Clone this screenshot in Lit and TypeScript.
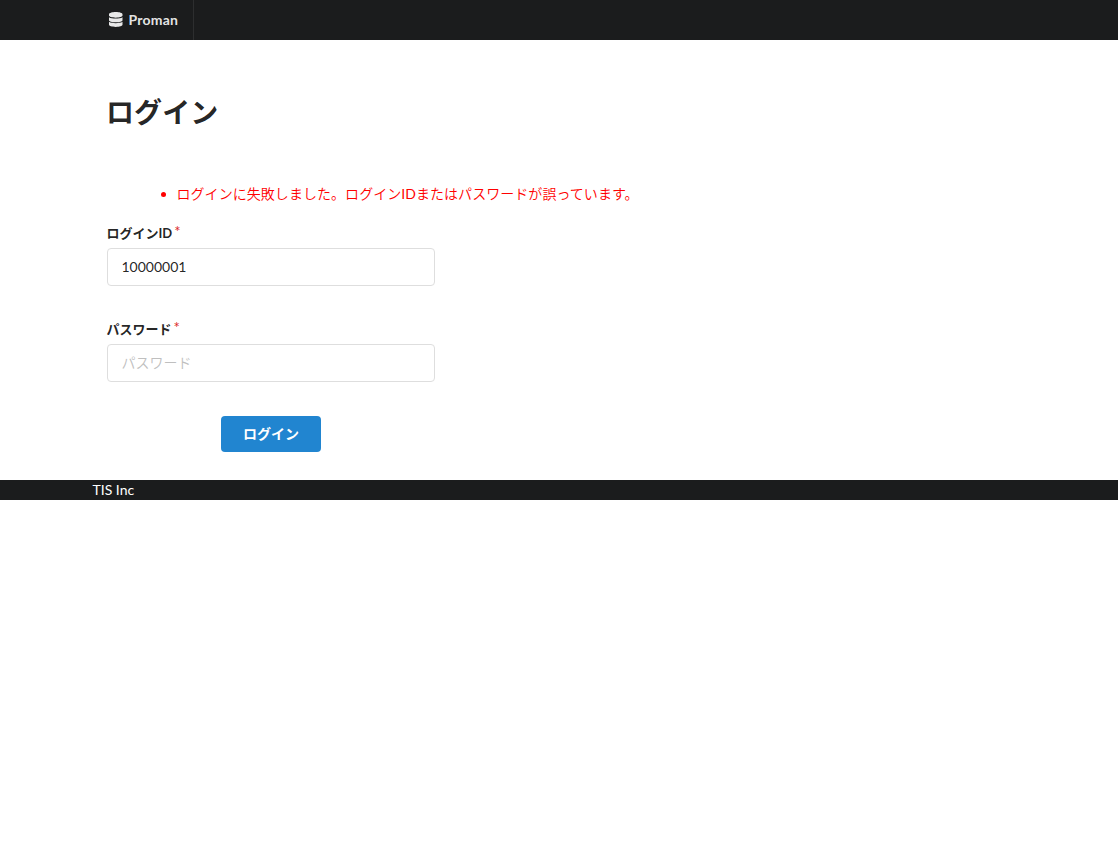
import { LitElement, html, css } from "lit";
import { customElement } from "lit/decorators.js";

@customElement("app-root")
class AppRoot extends LitElement {
  static styles = css`
    :host { display: block; font: 14px/20px Lato, "Noto Sans CJK JP DemiLight", "Noto Sans CJK JP", sans-serif; color: rgba(0,0,0,.87); }
    * { box-sizing: border-box; }
    .bar { height: 40px; background: #1b1c1d; padding-left: 93px; display: flex; }
    .brand { display: flex; align-items: center; width: 101px; padding-left: 16px; border-right: 1px solid #2d2e2f; color: rgba(255,255,255,.9); font-weight: 700; letter-spacing: .2px; }
    .brand svg { width: 13.5px; height: 15px; margin: -1px 6px 0 0; }
    .main { height: 440px; padding: 52px 0 0 107px; }
    h1 { margin: 0 0 0 -1px; height: 40px; font-family: Lato, "Noto Sans CJK JP", sans-serif; font-size: 28px; line-height: 40px; font-weight: 700; letter-spacing: .1px; }
    .errors { margin: 52px 0 0; padding: 0 0 0 69.5px; color: #f00; line-height: 20px; letter-spacing: .05px; }
    .errors li { height: 20px; }
    .label { display: block; height: 17px; margin: 21px 0 6px -.5px; font-family: Lato, "Noto Sans CJK JP", sans-serif; font-size: 13px; line-height: 17px; font-weight: 700; }
    .second { margin-top: 35px; }
    .star { color: #db2828; margin-left: 2px; display: inline-block; font-weight: 400; font-size: 15px; line-height: 10px; vertical-align: 1.5px; }
    input { display: block; width: 328px; height: 38px; border: 1px solid #dedede; border-radius: 4px; padding: 0 13.5px 1px; font: inherit; color: inherit; outline: none; background: #fff; }
    input::placeholder { color: #bfbfbf; opacity: 1; }
    button { display: block; width: 100px; height: 36px; margin: 34px 0 0 114px; border: 0; border-radius: 4px; background: #2185d0; color: #fff; font: 700 14px/20px Lato, "Noto Sans CJK JP", sans-serif; padding: 0; }
    .foot { height: 20px; background: #1b1c1d; color: #fff; padding-left: 92.5px; }
  `;
  render() {
    return html`
      <header class="bar"><div class="brand">
        <svg viewBox="0 0 448 512" preserveAspectRatio="none" fill="currentColor"><path d="M448 73.143v45.714C448 159.143 347.667 192 224 192S0 159.143 0 118.857V73.143C0 32.857 100.333 0 224 0s224 32.857 224 73.143zM448 176v102.857C448 319.143 347.667 352 224 352S0 319.143 0 278.857V176c48.125 33.143 136.208 48.572 224 48.572S399.874 209.143 448 176zm0 160v102.857C448 479.143 347.667 512 224 512S0 479.143 0 438.857V336c48.125 33.143 136.208 48.572 224 48.572S399.874 369.143 448 336z"/></svg>
        <span>Proman</span></div></header>
      <main class="main">
        <h1>ログイン</h1>
        <ul class="errors"><li>ログインに失敗しました。ログインIDまたはパスワードが誤っています。</li></ul>
        <label class="label">ログインID<span class="star">*</span></label>
        <input type="text" value="10000001">
        <label class="label second">パスワード<span class="star">*</span></label>
        <input type="password" placeholder="パスワード">
        <button>ログイン</button>
      </main>
      <footer class="foot">TIS Inc</footer>`;
  }
}
